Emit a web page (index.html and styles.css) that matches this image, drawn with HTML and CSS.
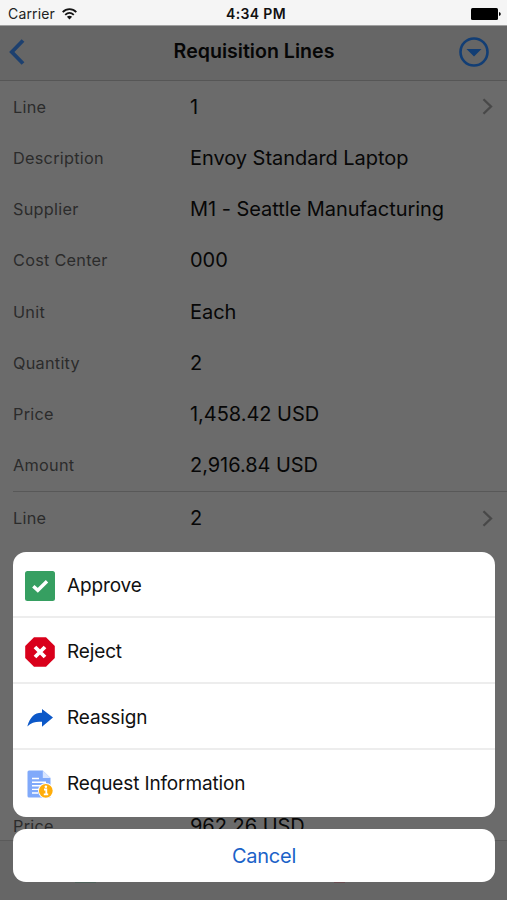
FILE: index.html
```html
<!DOCTYPE html>
<html lang="en">
<head>
<meta charset="utf-8">
<title>Requisition Lines</title>
<link rel="stylesheet" href="styles.css">
</head>
<body>
<div class="screen">
  <header class="status">
    <div class="carrier"><span>Carrier</span>
      <svg width="15" height="12" viewBox="0 0 15 12" fill="none" stroke="#151515" stroke-width="1.8"><path d="M.7 4.2C4.6.2 10.4.2 14.3 4.2M3.2 6.9C5.8 4.4 9.2 4.4 11.8 6.9"/><path d="M4.9 8.8Q7.5 6.5 10.1 8.8L7.5 11.5Z" fill="#151515" stroke="none"/></svg>
    </div>
    <span class="clock">4:34 PM</span>
    <svg class="battery" width="30" height="12" viewBox="0 0 30 12"><rect width="27" height="12" rx="1.5"/><path d="M28 4Q29.8 4.5 29.8 6T28 8Z"/></svg>
  </header>
  <nav class="nav">
    <svg width="16" height="26" viewBox="0 0 16 26" fill="none" stroke="#1d406f" stroke-width="3.8"><path d="M14 1.5 2.8 13 14 24.5"/></svg>
    <h1>Requisition Lines</h1>
    <svg width="30" height="30" viewBox="0 0 30 30"><circle cx="15" cy="15" r="13.5" fill="none" stroke="#123e75" stroke-width="2.6"/><path d="M7.5 12H22.5L15 19.5Z" fill="#123e75"/></svg>
  </nav>
  <main class="lines">
    <dl class="group">
      <div class="row"><dt>Line</dt><dd>1</dd><svg class="chevron" width="11" height="17" viewBox="0 0 11 17"><path d="M1.5 1.2 9 8.5 1.5 15.8"/></svg></div>
      <div class="row"><dt>Description</dt><dd>Envoy Standard Laptop</dd></div>
      <div class="row"><dt>Supplier</dt><dd>M1 - Seattle Manufacturing</dd></div>
      <div class="row"><dt>Cost Center</dt><dd>000</dd></div>
      <div class="row"><dt>Unit</dt><dd>Each</dd></div>
      <div class="row"><dt>Quantity</dt><dd>2</dd></div>
      <div class="row"><dt>Price</dt><dd>1,458.42 USD</dd></div>
      <div class="row"><dt>Amount</dt><dd>2,916.84 USD</dd></div>
    </dl>
    <dl class="group second">
      <div class="row"><dt>Line</dt><dd>2</dd><svg class="chevron" width="11" height="17" viewBox="0 0 11 17"><path d="M1.5 1.2 9 8.5 1.5 15.8"/></svg></div>
      <div class="row"></div>
      <div class="row"></div>
      <div class="row"></div>
      <div class="row"></div>
      <div class="row"></div>
      <div class="row"><dt>Price</dt><dd>962.26 USD</dd></div>
    </dl>
  </main>
  <footer class="toolbar"><i class="tool-approve"></i><i class="tool-reject"></i></footer>
  <section class="sheet">
    <ul class="actions">
      <li><svg width="30" height="30" viewBox="0 0 30 30"><rect width="30" height="30" rx="2.5" fill="#369f61"/><path d="M8.3 15.2 12.8 19.3 22 10.2" fill="none" stroke="#fff" stroke-width="3.4"/></svg><span>Approve</span></li>
      <li><svg width="30" height="30" viewBox="0 0 30 30"><path d="M9 .3H21L29.8 9V21L21 29.7H9L.2 21V9Z" fill="#d9001b"/><path d="M10 10 20 20M20 10 10 20" stroke="#fff" stroke-width="3.8"/></svg><span>Reject</span></li>
      <li><svg width="30" height="30" viewBox="0 0 30 30"><path d="M2.3 23.5C5.2 13.5 10 9.5 17 9.8V6L28 14.6 17 23.7V18.8C11 18.3 6.5 19.4 2.3 23.5Z" fill="#0c58c8"/></svg><span>Reassign</span></li>
      <li><svg width="30" height="30" viewBox="0 0 30 30"><path d="M4 1.5H17.8L25.5 9V28.5H4Q2.5 28.5 2.5 27V3Q2.5 1.5 4 1.5Z" fill="#80a9fa"/><path d="M17.8 1.5 25.5 9H17.8Z" fill="#d8e5ff"/><path d="M7 9.5H14M7 13.2H21M7 16.8H20M7 20.4H14M7 24H13" stroke="#fff" stroke-width="1.4"/><circle cx="20.8" cy="21.8" r="7.8" fill="#fff"/><circle cx="20.8" cy="21.8" r="6.9" fill="#ffad0a"/><path d="M19 20.5H21.3V25.4M18.8 25.4H23.2" fill="none" stroke="#fff" stroke-width="1.8"/><circle cx="20.9" cy="17.8" r="1.3" fill="#fff"/></svg><span>Request Information</span></li>
    </ul>
    <button class="cancel">Cancel</button>
  </section>
</div>
</body>
</html>
```
FILE: styles.css
```css
* { box-sizing: border-box; }
body { margin: 0; font-family: Inter, sans-serif; background: #6b6b6b; }
h1, dl, dd, ul { margin: 0; padding: 0; }
svg { display: block; flex: none; }
.screen { position: relative; height: 900px; overflow: hidden; display: flex; flex-direction: column; }
.status { height: 26px; flex: none; padding: 2px 6px 0 8px; background: #f5f5f5; display: grid; grid-template-columns: 1fr auto 1fr; align-items: center; border-bottom: 1px solid #a0a0a0; color: #222; }
.carrier { display: flex; align-items: center; gap: 7px; font-size: 14px; letter-spacing: .15px; }
.clock { font-size: 14px; font-weight: 600; color: #111; letter-spacing: .35px; padding-left: 3px; }
.battery { justify-self: end; }
.nav { height: 55px; flex: none; padding: 0 18px 3px 9px; display: grid; grid-template-columns: 30px 1fr 30px; align-items: center; background: #666; border-bottom: 1px solid #565656; }
.nav h1 { font-size: 19.6px; font-weight: 600; color: #060606; text-align: center; margin: 0 0 2px 10px; }
.lines { flex: 1; min-height: 0; overflow: hidden; }
.group { margin-left: 13px; border-bottom: 1px solid #585858; }
.second { padding-top: .5px; }
.row { height: 51.25px; display: flex; align-items: center; padding-right: 14px; }
dt { width: 177px; font-size: 16.3px; letter-spacing: .25px; color: #2b2b2b; }
dd { flex: 1; font-size: 20px; letter-spacing: -.04px; color: #070707; white-space: nowrap; }
.chevron { fill: none; stroke: #484848; stroke-width: 2.3; }
.toolbar { height: 60px; flex: none; background: #666; border-top: 1px solid #5a5a5a; display: flex; justify-content: space-between; padding: 40px 162px 0 75px; }
.toolbar i { height: 2px; background: #50605a; width: 21px; }
.toolbar .tool-reject { background: #684d51; width: 11px; }
.sheet { position: absolute; left: 13px; right: 12px; top: 552px; display: flex; flex-direction: column; gap: 12px; }
.actions { list-style: none; height: 265px; background: #fff; border-radius: 13px; overflow: hidden; }
.actions li { height: 66px; padding: 3px 12px 0; display: flex; align-items: center; gap: 12px; font-size: 19px; letter-spacing: -.14px; color: #111; border-bottom: 2px solid #ededed; }
.actions li:last-child { border: 0; padding-top: 1px; }
.cancel { height: 53px; border: 0; border-radius: 13px; background: #fff; font: 20px Inter, sans-serif; letter-spacing: -.25px; color: #1b62c8; padding: 0 0 0 20px; }
```
